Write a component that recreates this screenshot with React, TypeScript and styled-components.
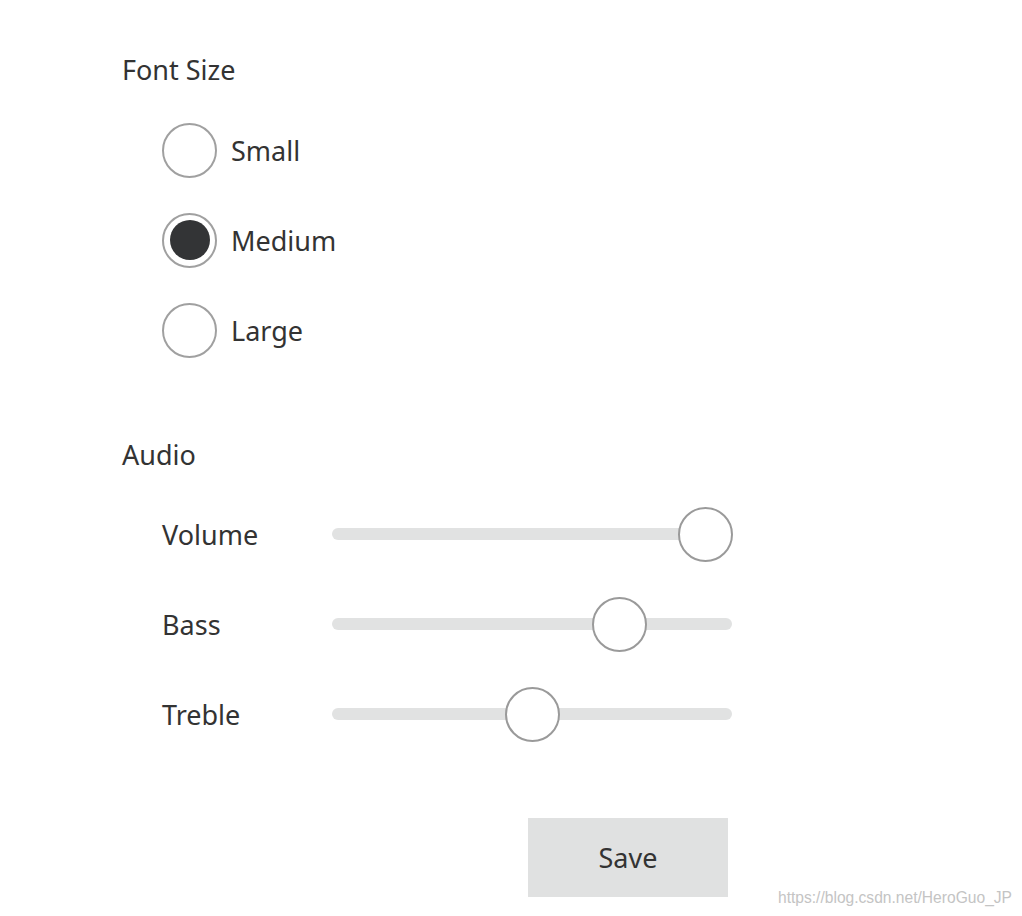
import React, { useState } from "react";
import styled, { createGlobalStyle } from "styled-components";

const GlobalStyle = createGlobalStyle`
  html, body {
    margin: 0;
    padding: 0;
    background: #ffffff;
  }
  body {
    font-family: "Noto Sans", "Open Sans", sans-serif;
    color: #333333;
  }
`;

const Page = styled.div`
  position: relative;
  width: 1022px;
  height: 916px;
  box-sizing: border-box;
  padding: 55px 0 0 122px;
  overflow: hidden;
`;

const Heading = styled.div<{ $top?: number }>`
  font-size: 27px;
  line-height: 30px;
  height: 30px;
  margin-top: ${(p) => p.$top ?? 0}px;
  color: #333;
`;

const RadioList = styled.div`
  display: flex;
  flex-direction: column;
  gap: 36px;
  margin-top: 38px;
  padding-left: 40px;
`;

const RadioRow = styled.label`
  display: flex;
  align-items: center;
  height: 54px;
  gap: 14px;
  font-size: 27px;
  cursor: pointer;
`;

const RadioCircle = styled.span<{ $checked: boolean }>`
  width: 55px;
  height: 55px;
  box-sizing: border-box;
  border-radius: 50%;
  border: 2px solid #a0a0a0;
  background: #fff;
  display: flex;
  align-items: center;
  justify-content: center;
  flex-shrink: 0;
  &::after {
    content: "";
    display: ${(p) => (p.$checked ? "block" : "none")};
    width: 40px;
    height: 40px;
    border-radius: 50%;
    background: #333436;
  }
`;

const SliderList = styled.div`
  display: flex;
  flex-direction: column;
  gap: 36px;
  margin-top: 37px;
  padding-left: 40px;
`;

const SliderRow = styled.div`
  display: grid;
  grid-template-columns: 170px 400px;
  align-items: center;
  height: 54px;
  font-size: 27px;
`;

const Track = styled.div`
  position: relative;
  height: 12px;
  border-radius: 6px;
  background: #e1e2e2;
`;

const Thumb = styled.div`
  position: absolute;
  top: 50%;
  width: 55px;
  height: 55px;
  box-sizing: border-box;
  margin-left: -27px;
  margin-top: -27px;
  border-radius: 50%;
  border: 2px solid #9a9a9a;
  background: #fff;
`;

const Footer = styled.div`
  display: flex;
  justify-content: flex-end;
  width: 606px;
  margin-top: 77px;
`;

const SaveButton = styled.button`
  width: 200px;
  height: 79px;
  border: 0;
  background: #e0e1e1;
  color: #333;
  font-family: "Noto Sans", "Open Sans", sans-serif;
  font-size: 27px;
  cursor: pointer;
`;

const Watermark = styled.div`
  position: absolute;
  right: 10px;
  bottom: 9px;
  font-family: "Liberation Sans", Arial, sans-serif;
  font-size: 15.6px;
  color: #c4c4c4;
`;

const Slider: React.FC<{ value: number }> = ({ value }) => {
  // thumb travels between 27px and 373px on a 400px track
  const left = 27 + (346 * value) / 100;
  return (
    <Track>
      <Thumb style={{ left }} />
    </Track>
  );
};

const sizes = ["Small", "Medium", "Large"];

const App: React.FC = () => {
  const [size, setSize] = useState("Medium");
  return (
    <Page>
      <GlobalStyle />
      <Heading>Font Size</Heading>
      <RadioList>
        {sizes.map((s) => (
          <RadioRow key={s} onClick={() => setSize(s)}>
            <RadioCircle $checked={size === s} />
            {s}
          </RadioRow>
        ))}
      </RadioList>
      <Heading $top={83}>Audio</Heading>
      <SliderList>
        <SliderRow>
          <span>Volume</span>
          <Slider value={100} />
        </SliderRow>
        <SliderRow>
          <span>Bass</span>
          <Slider value={75} />
        </SliderRow>
        <SliderRow>
          <span>Treble</span>
          <Slider value={50} />
        </SliderRow>
      </SliderList>
      <Footer>
        <SaveButton type="button">Save</SaveButton>
      </Footer>
      <Watermark>https://blog.csdn.net/HeroGuo_JP</Watermark>
    </Page>
  );
};

export default App;
